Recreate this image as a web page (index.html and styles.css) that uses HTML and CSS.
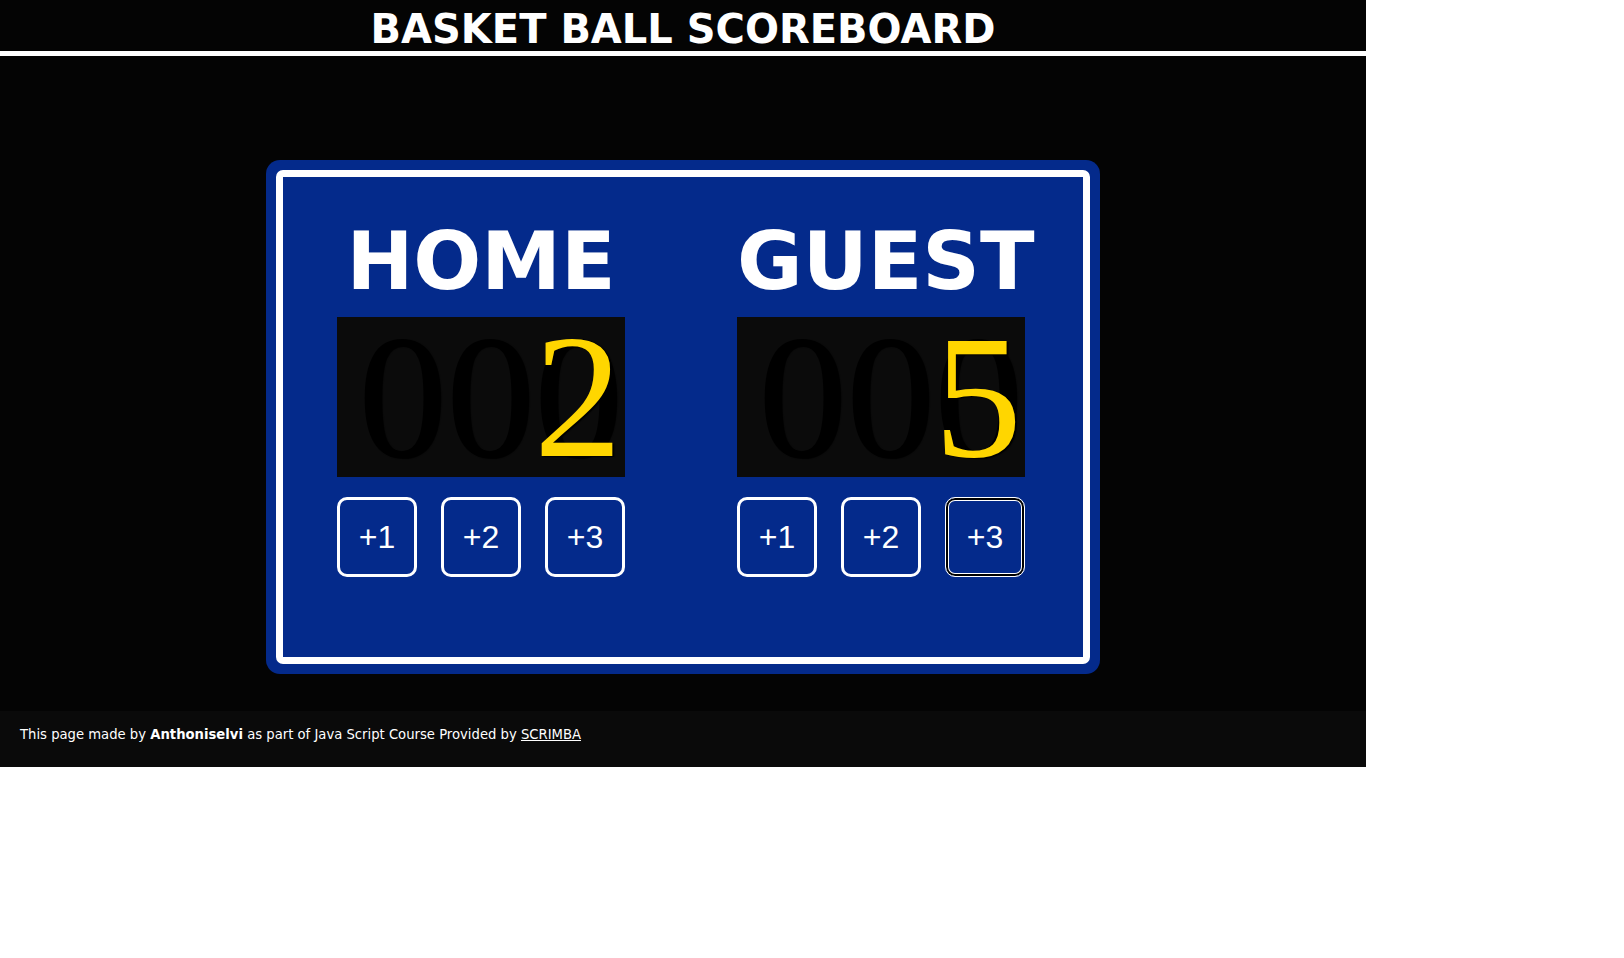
FILE: index.html
```html
<!DOCTYPE html>
<html lang="en">
<head>
<meta charset="utf-8">
<title>Basket Ball Scoreboard</title>
<link rel="stylesheet" href="styles.css">
</head>
<body>
<div class="page">
  <header class="top">
    <h1 class="title">BASKET BALL SCOREBOARD</h1>
  </header>
  <main class="main">
    <div class="board">
      <div class="board-inner">
        <section class="team">
          <h2 class="team-name">HOME</h2>
          <div class="score">
            <span class="score-bg">000</span>
            <span class="score-val">2</span>
          </div>
          <div class="buttons">
            <button class="btn">+1</button>
            <button class="btn">+2</button>
            <button class="btn">+3</button>
          </div>
        </section>
        <section class="team">
          <h2 class="team-name">GUEST</h2>
          <div class="score">
            <span class="score-bg">000</span>
            <span class="score-val">5</span>
          </div>
          <div class="buttons">
            <button class="btn">+1</button>
            <button class="btn">+2</button>
            <button class="btn btn-focus">+3</button>
          </div>
        </section>
      </div>
    </div>
  </main>
  <footer class="foot">
    <p class="foot-text">This page made by <b>Anthoniselvi</b> as part of Java Script Course Provided by <a class="foot-link" href="#">SCRIMBA</a></p>
  </footer>
</div>
</body>
</html>
```

FILE: styles.css
```css
html, body {
  margin: 0;
  padding: 0;
  background: #ffffff;
}

.page {
  width: 1366px;
  background: #040404;
  font-family: "DejaVu Sans", Verdana, sans-serif;
  color: #ffffff;
}

.top {
  box-sizing: border-box;
  height: 56px;
  padding-top: 9px;
  border-bottom: 5px solid #ffffff;
  background: #040404;
}

.title {
  margin: 0;
  font-family: "DejaVu Sans", Verdana, sans-serif;
  font-weight: bold;
  font-size: 40px;
  line-height: 40px;
  text-align: center;
  color: #ffffff;
}

.main {
  display: flex;
  justify-content: center;
  padding: 104px 0 37px;
}

.board {
  background: #042a8b;
  padding: 10px;
  border-radius: 14px;
}

.board-inner {
  display: grid;
  grid-template-columns: 288px 288px;
  column-gap: 112px;
  width: 814px;
  box-sizing: border-box;
  padding: 45px 58px 80px 54px;
  border: 7px solid #ffffff;
  border-radius: 7px;
  background: #042a8b;
}

.team {
  display: flex;
  flex-direction: column;
  align-items: stretch;
}

.team-name {
  margin: 0;
  font-family: "DejaVu Sans", Verdana, sans-serif;
  font-weight: bold;
  font-size: 80px;
  line-height: 80px;
  text-align: center;
  color: #ffffff;
  white-space: nowrap;
}

.score {
  position: relative;
  margin-top: 15px;
  height: 160px;
  background: #0b0b0b;
  font-family: "Liberation Serif", "Times New Roman", serif;
  font-size: 176px;
  line-height: 160px;
  text-align: right;
}

.score-bg {
  display: block;
  padding-right: 3px;
  color: #000000;
  text-shadow: 2px 1px 1px #000000;
}

.score-val {
  position: absolute;
  right: 3px;
  top: 0;
  color: #ffd600;
  text-shadow: 2px 1px 1px #000000;
}

.buttons {
  display: flex;
  justify-content: space-between;
  margin-top: 20px;
}

.btn {
  box-sizing: border-box;
  width: 80px;
  height: 80px;
  padding: 0;
  border: 3px solid #ffffff;
  border-radius: 10px;
  background: transparent;
  color: #ffffff;
  font-family: "Liberation Sans", Arial, sans-serif;
  font-size: 32px;
  line-height: 1;
}

.btn-focus {
  border-width: 1px;
  box-shadow: inset 0 0 0 2px #000000, inset 0 0 0 3px #ffffff;
}

.foot {
  background: #0a0a0a;
  height: 56px;
  box-sizing: border-box;
  padding: 16px 20px 0;
}

.foot-text {
  margin: 0;
  font-family: "DejaVu Sans", Verdana, sans-serif;
  font-size: 13.2px;
  line-height: 15px;
  color: #ffffff;
}

.foot-link {
  color: #ffffff;
  text-decoration: underline;
}
```
